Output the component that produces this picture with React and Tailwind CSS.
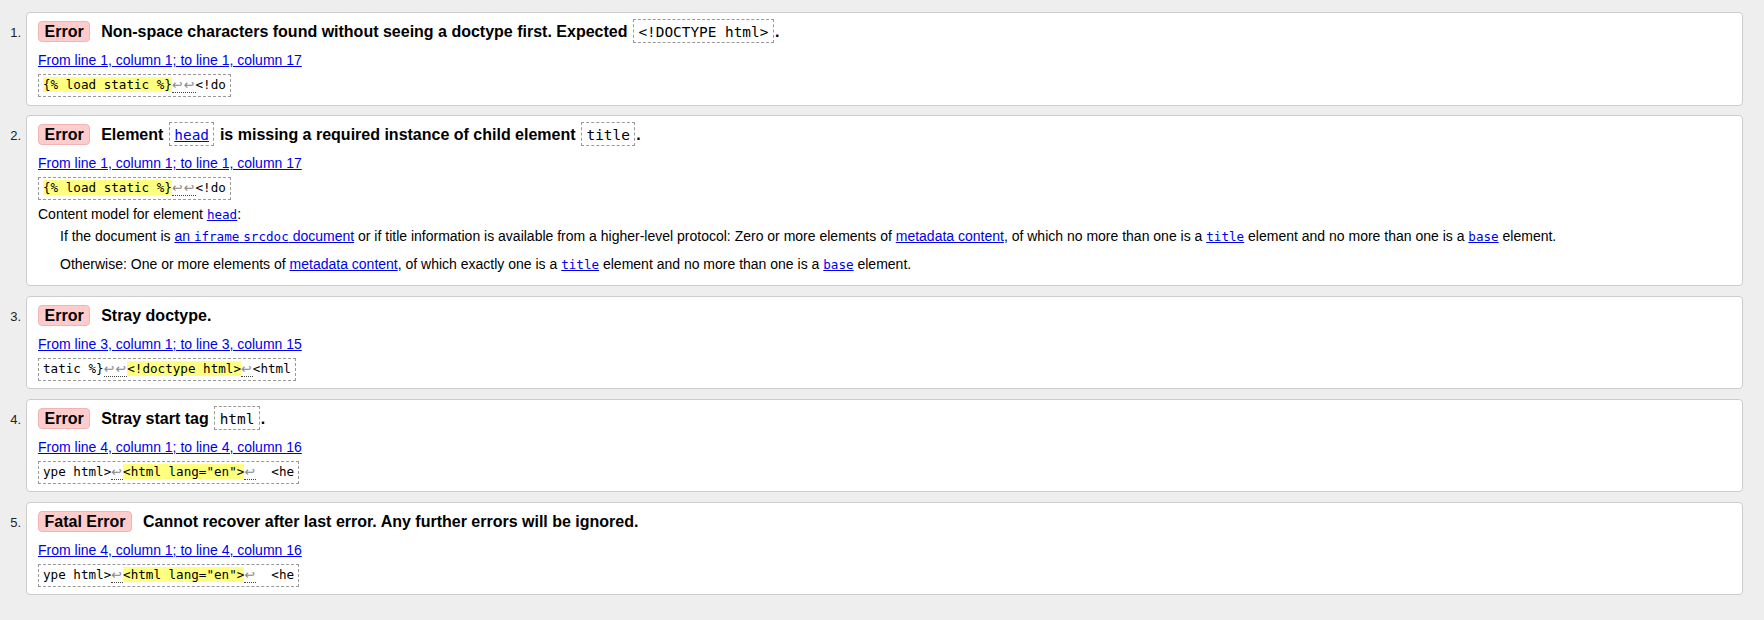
import React from 'react';

const MONO = "font-['DejaVu_Sans_Mono',monospace]";

const Badge = ({ children }) => (
  <span className="inline-block rounded-[4px] border border-[#f0b4b4] bg-[#ffcccc] px-[5.5px] leading-[19px]">
    {children}
  </span>
);

// inline code inside a heading or sentence, dashed box
const BoxCode = ({ children }) => (
  <code className={`${MONO} mx-[1px] border border-dashed border-[#999] px-[4.5px] pt-[4px] pb-[2px] text-[0.9em] font-normal leading-none`}>
    {children}
  </code>
);

const Mono = ({ children }) => (
  <code className={`${MONO} text-[0.9em] leading-none`}>{children}</code>
);

const Link = ({ children }) => (
  <a href="#" className="text-[#0000ee] underline">
    {children}
  </a>
);

const Lf = () => (
  <span className="inline-block w-[11.8px] font-['DejaVu_Sans',sans-serif] text-[#888]">↩</span>
);

const Dotted = ({ children }) => (
  <span className="border-b border-dotted border-[#444]">{children}</span>
);

const Hl = ({ children }) => <span className="bg-[#ffff80]">{children}</span>;

const Extract = ({ children }) => (
  <div className={`${MONO} mt-[5px] w-fit whitespace-pre border border-dashed border-[#999] pl-[4px] pr-[4px] pt-[1px] pb-[3px] text-[12.6px] leading-[17px] text-black`}>
    {children}
  </div>
);

const Location = ({ children }) => (
  <p className="mt-[8px] text-[14px] leading-[18px]">
    <Link>{children}</Link>
  </p>
);

const Item = ({ n, type = 'Error', title, location, extract, children }) => (
  <li className="flex items-baseline">
    <span className="w-[26px] shrink-0 pr-[5px] text-right text-[13px] text-[#222]">{n}.</span>
    <div className="flex-1 rounded-[4px] border border-[#ccc] bg-white pl-[11px] pr-[11px] pt-[8px] pb-[7.5px]">
      <p className="text-[16px] font-bold leading-[22px] text-black">
        <Badge>{type}</Badge>
        <span className="ml-[11px]">{title}</span>
      </p>
      <Location>{location}</Location>
      <Extract>{extract}</Extract>
      {children}
    </div>
  </li>
);

const App = () => {
  return (
    <div className="min-h-[620px] w-full bg-[#eee] pt-[12px] pr-[21px] font-['Liberation_Sans',Arial,sans-serif] text-black">
      <ol className="flex list-none flex-col gap-[9.5px]">
        <Item
          n={1}
          title={
            <>
              Non-space characters found without seeing a doctype first. Expected <BoxCode>&lt;!DOCTYPE html&gt;</BoxCode>.
            </>
          }
          location="From line 1, column 1; to line 1, column 17"
          extract={
            <>
              <Hl>{'{% load static %}'}</Hl>
              <Dotted><Lf /><Lf /></Dotted>
              {'<!do'}
            </>
          }
        />

        <Item
          n={2}
          title={
            <>
              Element <BoxCode><Link>head</Link></BoxCode> is missing a required instance of child element <BoxCode>title</BoxCode>.
            </>
          }
          location="From line 1, column 1; to line 1, column 17"
          extract={
            <>
              <Hl>{'{% load static %}'}</Hl>
              <Dotted><Lf /><Lf /></Dotted>
              {'<!do'}
            </>
          }
        >
          <div className="mt-[5px] mb-[4.5px] text-[14px] leading-[18px]">
            <p>
              Content model for element <Link><Mono>head</Mono></Link>:
            </p>
            <p className="mt-[4px] ml-[22px]">
              If the document is <Link>an <Mono>iframe</Mono> <Mono>srcdoc</Mono> document</Link> or if title information is available from a higher-level protocol: Zero or more elements of <Link>metadata content</Link>, of which no more than one is a <Link><Mono>title</Mono></Link> element and no more than one is a <Link><Mono>base</Mono></Link> element.
            </p>
            <p className="mt-[10px] ml-[22px]">
              Otherwise: One or more elements of <Link>metadata content</Link>, of which exactly one is a <Link><Mono>title</Mono></Link> element and no more than one is a <Link><Mono>base</Mono></Link> element.
            </p>
          </div>
        </Item>

        <Item
          n={3}
          title="Stray doctype."
          location="From line 3, column 1; to line 3, column 15"
          extract={
            <>
              {'tatic %}'}
              <Dotted><Lf /><Lf /></Dotted>
              <Hl>{'<!doctype html>'}</Hl>
              <Dotted><Lf /></Dotted>
              {'<html'}
            </>
          }
        />

        <Item
          n={4}
          title={
            <>
              Stray start tag <BoxCode>html</BoxCode>.
            </>
          }
          location="From line 4, column 1; to line 4, column 16"
          extract={
            <>
              {'ype html>'}
              <Dotted><Lf /></Dotted>
              <Hl>{'<html lang="en">'}</Hl>
              <Dotted><Lf /></Dotted>
              {'  <he'}
            </>
          }
        />

        <Item
          n={5}
          type="Fatal Error"
          title="Cannot recover after last error. Any further errors will be ignored."
          location="From line 4, column 1; to line 4, column 16"
          extract={
            <>
              {'ype html>'}
              <Dotted><Lf /></Dotted>
              <Hl>{'<html lang="en">'}</Hl>
              <Dotted><Lf /></Dotted>
              {'  <he'}
            </>
          }
        />
      </ol>
    </div>
  );
};

export default App;
